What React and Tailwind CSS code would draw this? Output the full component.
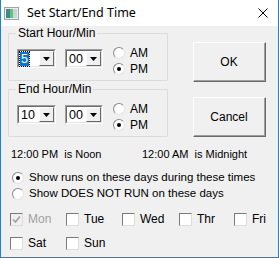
import React from 'react';

const font = { fontFamily: '"Liberation Sans", Arial, sans-serif' };

function Radio({ checked, label, size = 'text-[11.5px]', className = '' }) {
  return (
    <div className={`flex items-center h-[14px] ${className}`}>
      <span className="w-[12px] h-[12px] rounded-full border border-t-[#8a8a8a] border-l-[#8a8a8a] border-r-[#e3e3e3] border-b-[#e3e3e3] bg-white flex items-center justify-center shrink-0">
        {checked && <span className="w-[4px] h-[4px] rounded-full bg-black" />}
      </span>
      {label && <span className={`ml-[5px] ${size} leading-none text-black`}>{label}</span>}
    </div>
  );
}

function Check({ label, disabled, checked }) {
  return (
    <div className="flex items-center h-[14px]">
      <span
        className={`w-[13px] h-[13px] border border-t-[#7a7a7a] border-l-[#7a7a7a] border-r-[#dcdcdc] border-b-[#dcdcdc] flex items-center justify-center shrink-0 ${
          disabled ? 'bg-[#f0f0f0]' : 'bg-white'
        }`}
      >
        {checked && (
          <svg width="9" height="9" viewBox="0 0 9 9">
            <path d="M1 4.5 L3.5 7 L8 1.5" fill="none" stroke={disabled ? '#a0a0a0' : '#000'} strokeWidth="1.6" />
          </svg>
        )}
      </span>
      <span className={`ml-[5px] text-[12px] leading-none ${disabled ? 'text-[#a0a0a0]' : 'text-black'}`}>{label}</span>
    </div>
  );
}

function Combo({ value, selected, w }) {
  return (
    <div className={`flex h-[19px] ${w} border border-t-[#a0a0a0] border-l-[#a0a0a0] border-r-white border-b-white`}>
      <div className="flex-1 flex border border-t-[#696969] border-l-[#696969] border-r-[#e3e3e3] border-b-[#e3e3e3] bg-white">
        <div className="flex-1 flex items-center pl-[1px]">
          <span
            className={`text-[12.5px] leading-[14px] px-[1px] ${
              selected ? 'bg-[#0078d7] text-white outline outline-1 outline-dotted outline-black' : 'text-black'
            }`}
          >
            {value}
          </span>
        </div>
        <div className="w-[15px] bg-[#f0f0f0] border border-t-white border-l-white border-r-[#696969] border-b-[#696969] flex items-center justify-center">
          <svg width="7" height="4" viewBox="0 0 7 4">
            <path d="M0 0 H7 L3.5 4 Z" fill="#000" />
          </svg>
        </div>
      </div>
    </div>
  );
}

function Group({ title, hour, selected }) {
  return (
    <div className="relative w-[160px] h-[48px] border border-[#dcdcdc] rounded-[1px]">
      <span className="absolute -top-[8px] left-[7px] px-[2px] bg-[#f0f0f0] text-[12px] leading-[14px] text-black">{title}</span>
      <div className="flex pl-[8px] pt-[14px]">
        <div className="mt-[1px]">
          <Combo value={hour} selected={selected} w="w-[39px]" />
        </div>
        <div className="ml-[9px] mt-[1px]">
          <Combo value="00" w="w-[38px]" />
        </div>
        <div className="ml-[10px] flex flex-col gap-[2px] -mt-[2px]">
          <Radio label="AM" size="text-[12px]" />
          <Radio label="PM" size="text-[12px]" checked />
        </div>
      </div>
    </div>
  );
}

function Button({ label }) {
  return (
    <div className="w-[73px] h-[40px] border border-t-white border-l-white border-r-[#696969] border-b-[#696969] bg-[#f0f0f0]">
      <div className="w-full h-full border-r border-b border-[#a0a0a0] flex items-center justify-center text-[12px] text-black">
        {label}
      </div>
    </div>
  );
}

export default function App() {
  return (
    <div className="w-[279px] h-[258px] flex flex-col bg-[#f0f0f0] border-x border-b border-[#1883d7] overflow-hidden" style={font}>
      {/* Title bar */}
      <div className="h-[26px] bg-white flex items-center pl-[3px] pr-[10px] shrink-0">
        <svg width="15" height="13" viewBox="0 0 15 13" className="mt-[1px]">
          <rect x="0.5" y="0.5" width="14" height="12" fill="#e8eef0" stroke="#9aa6ac" />
          <rect x="2" y="2" width="4" height="9" fill="#3c8d8a" />
          <rect x="6" y="2" width="3" height="9" fill="#6fbf73" />
          <rect x="9" y="2" width="4" height="9" fill="#c7d6dd" />
        </svg>
        <span className="ml-[8px] text-[12.5px] text-black" style={{ fontFamily: '"Noto Sans", "Liberation Sans", sans-serif' }}>
          Set Start/End Time
        </span>
        <div className="flex-1" />
        <svg width="10" height="10" viewBox="0 0 10 10">
          <path d="M0.5 0.5 L9.5 9.5 M9.5 0.5 L0.5 9.5" stroke="#000" strokeWidth="1" />
        </svg>
      </div>

      <div className="flex flex-col pl-[7px] pt-[7px]">
        <div className="flex">
          <div className="flex flex-col gap-[8px]">
            <Group title="Start Hour/Min" hour="5" selected />
            <Group title="End Hour/Min" hour="10" />
          </div>
          <div className="flex flex-col ml-[25px] mt-[9px] gap-[15px]">
            <Button label="OK" />
            <Button label="Cancel" />
          </div>
        </div>

        <div className="flex mt-[10px] text-[11px] leading-[14px] text-black">
          <span className="w-[134px] pl-[3px]">12:00 PM&nbsp; is Noon</span>
          <span>12:00 AM&nbsp; is Midnight</span>
        </div>

        <div className="flex flex-col gap-[2px] mt-[10px] pl-[4px]">
          <Radio checked label="Show runs on these days during these times" />
          <Radio label="Show DOES NOT RUN on these days" />
        </div>

        <div className="grid grid-cols-[56px_56px_57px_55px_40px] gap-y-[10px] mt-[11px] pl-[2px]">
          <Check label="Mon" disabled checked />
          <Check label="Tue" />
          <Check label="Wed" />
          <Check label="Thr" />
          <Check label="Fri" />
          <Check label="Sat" />
          <Check label="Sun" />
        </div>
      </div>
    </div>
  );
}
